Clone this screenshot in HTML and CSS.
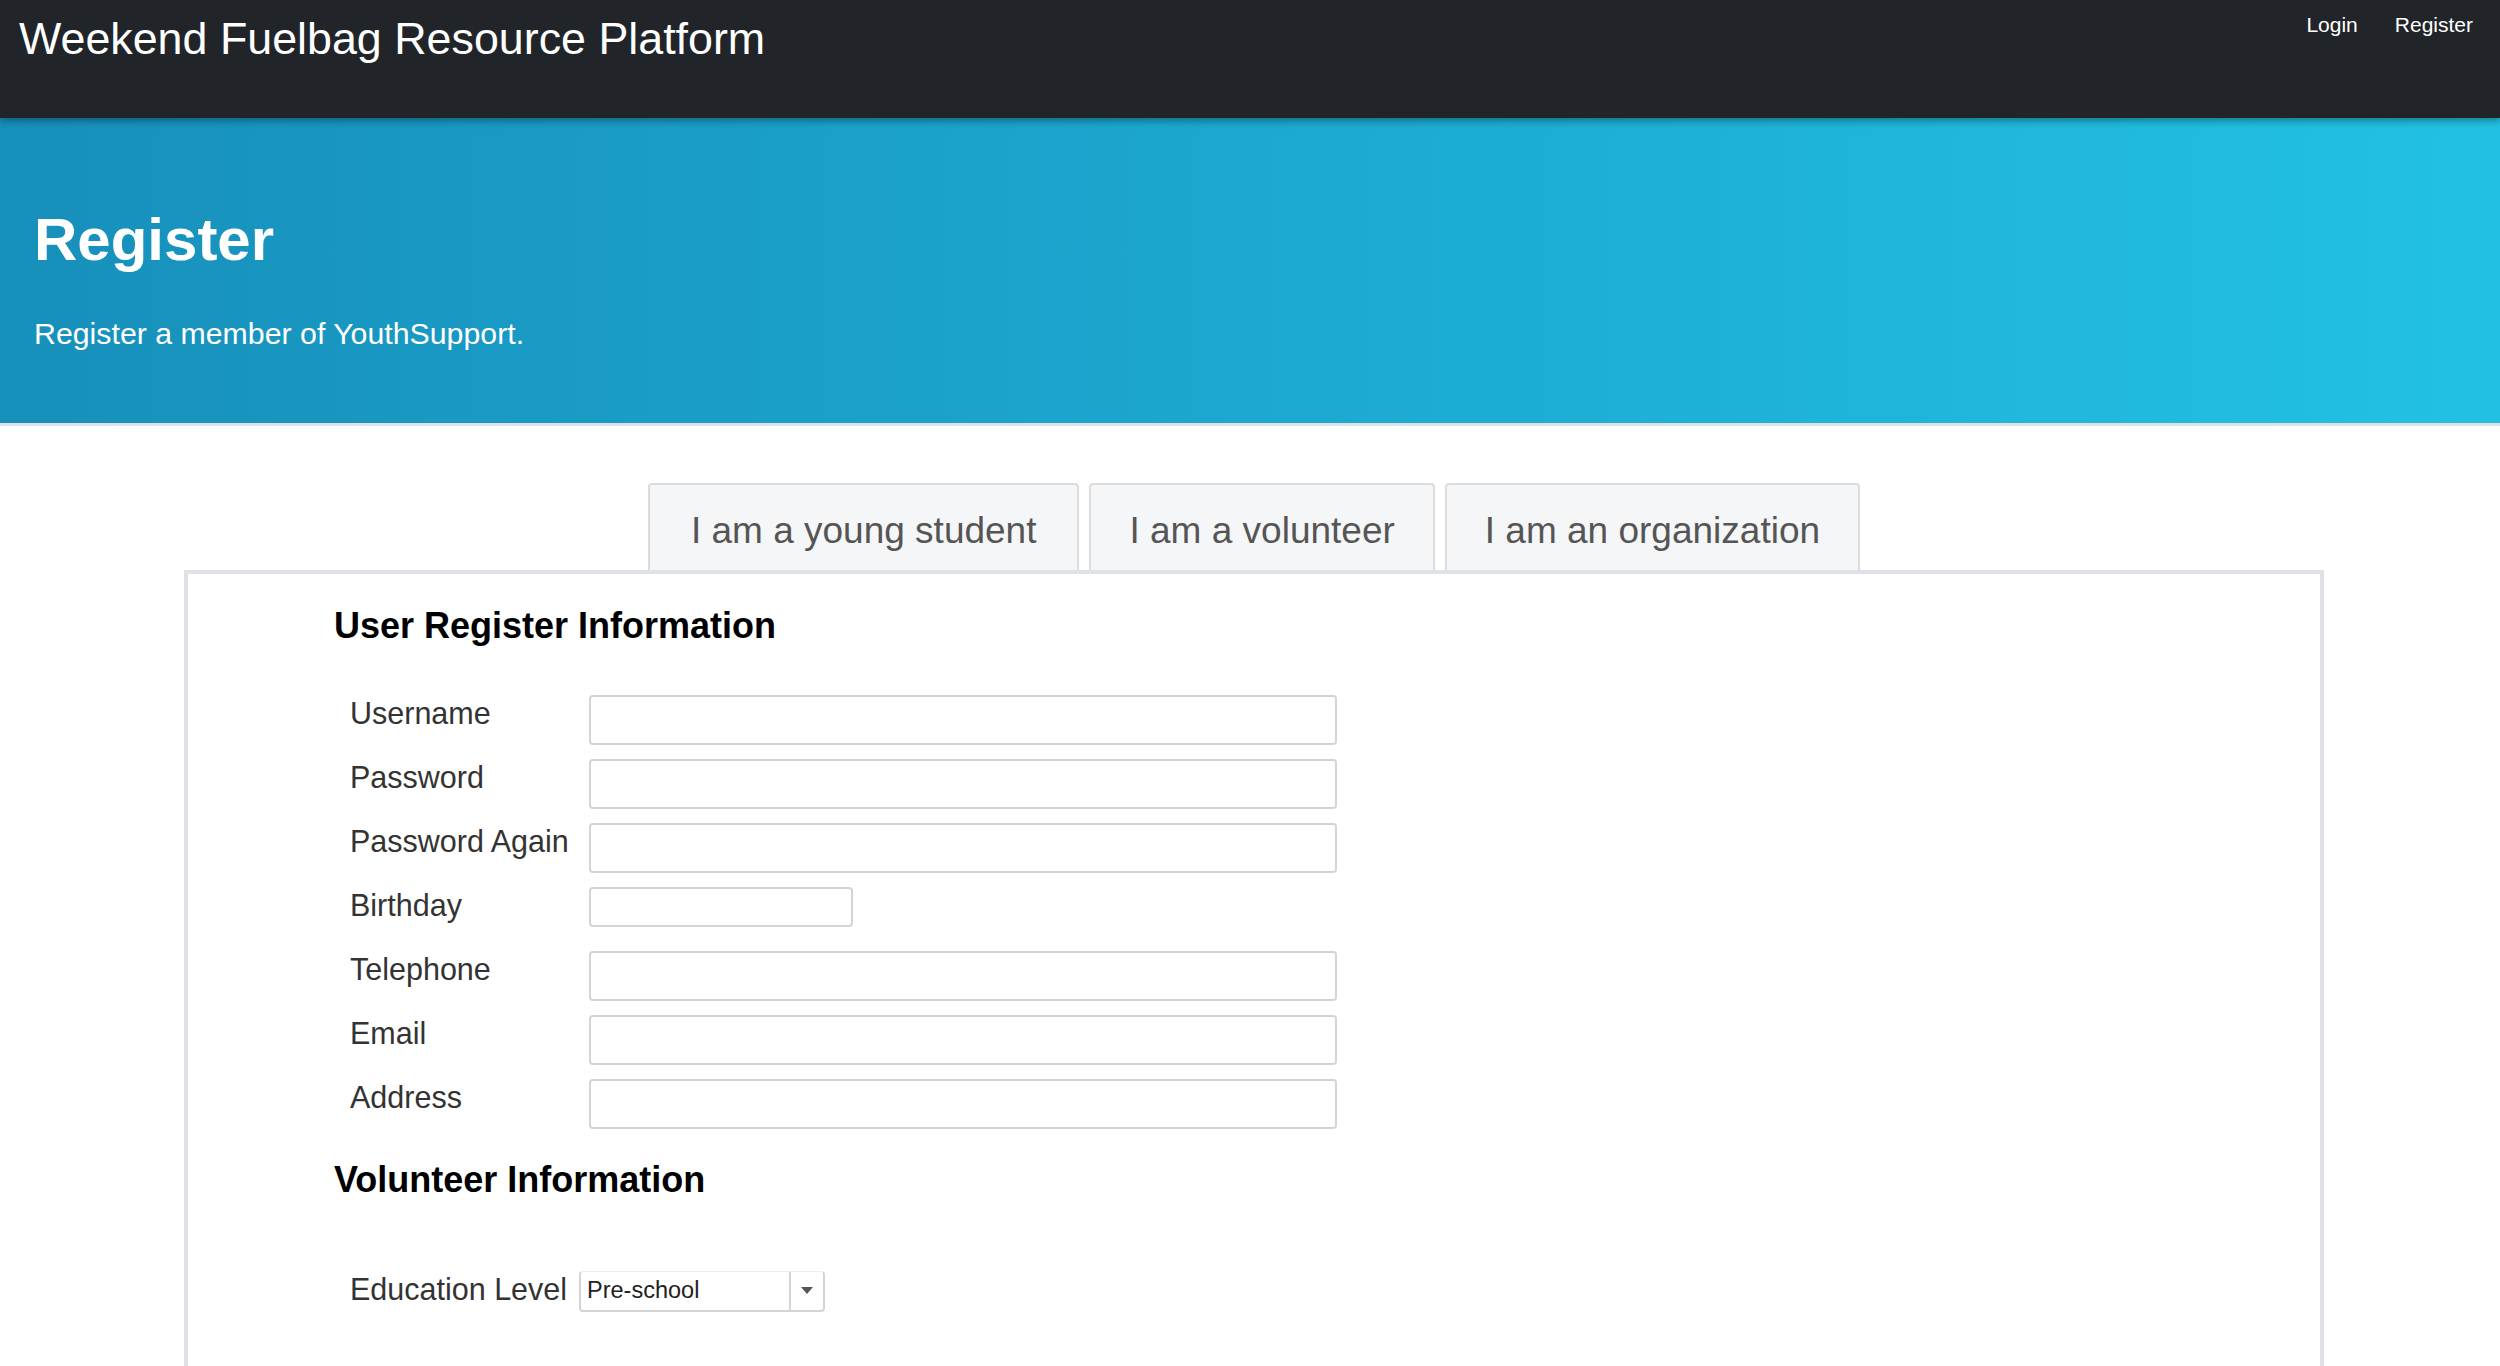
FILE: index.html
```html
<!DOCTYPE html>
<html lang="en">
<head>
<meta charset="utf-8">
<title>Register - Weekend Fuelbag Resource Platform</title>
<link rel="stylesheet" href="styles.css">
</head>
<body>
<nav class="navbar">
  <a class="brand" href="#">Weekend Fuelbag Resource Platform</a>
  <div class="nav-links">
    <a class="nav-link" href="#">Login</a>
    <a class="nav-link" href="#">Register</a>
  </div>
</nav>
<header class="hero">
  <h1 class="hero-title">Register</h1>
  <p class="hero-sub">Register a member of YouthSupport.</p>
</header>
<main class="main">
  <div class="tabs">
    <div class="tab tab-wide">I am a young student</div>
    <div class="tab">I am a volunteer</div>
    <div class="tab">I am an organization</div>
  </div>
  <section class="panel">
    <h2 class="section-title">User Register Information</h2>
    <div class="form-row"><label class="form-label">Username</label><input class="field" type="text"></div>
    <div class="form-row"><label class="form-label">Password</label><input class="field" type="password"></div>
    <div class="form-row"><label class="form-label">Password Again</label><input class="field" type="password"></div>
    <div class="form-row"><label class="form-label">Birthday</label><input class="field field-short" type="text"></div>
    <div class="form-row"><label class="form-label">Telephone</label><input class="field" type="text"></div>
    <div class="form-row"><label class="form-label">Email</label><input class="field" type="text"></div>
    <div class="form-row"><label class="form-label">Address</label><input class="field" type="text"></div>
    <h2 class="section-title">Volunteer Information</h2>
    <div class="edu-row">
      <label class="edu-label">Education Level</label>
      <div class="select">
        <span class="select-value">Pre-school</span>
        <span class="select-arrow"><svg width="12" height="8" viewBox="0 0 12 8"><path d="M0 0 L12 0 L6 7 Z" fill="#555"/></svg></span>
      </div>
    </div>
  </section>
</main>
</body>
</html>
```
FILE: styles.css
```css
* { box-sizing: border-box; }
body {
  margin: 0;
  font-family: "Liberation Sans", Arial, Helvetica, sans-serif;
  background: #fff;
  color: #333;
}
.navbar {
  position: relative;
  z-index: 2;
  height: 118px;
  background: #212529;
  display: flex;
  justify-content: space-between;
  align-items: flex-start;
  box-shadow: 0 3px 7px rgba(0, 0, 0, 0.35);
}
.brand {
  color: #fff;
  text-decoration: none;
  font-size: 44.8px;
  line-height: 1;
  padding: 16px 0 0 19px;
}
.nav-links {
  display: flex;
  gap: 37px;
  padding: 14px 27px 0 0;
}
.nav-link {
  color: #fff;
  text-decoration: none;
  font-size: 21px;
  line-height: 1;
}
.hero {
  height: 308px;
  background: linear-gradient(to right, #1790bb 0%, #1ca8d0 50%, #22c1e3 100%);
  border-bottom: 3px solid #dee2e6;
  padding: 92px 0 0 34px;
  color: #fff;
}
.hero-title {
  margin: 0;
  font-size: 60px;
  line-height: 1;
  font-weight: bold;
}
.hero-sub {
  margin: 49px 0 0;
  font-size: 30.3px;
  line-height: 1;
}
.main {
  width: 2140px;
  margin-left: 184px;
}
.tabs {
  display: flex;
  justify-content: center;
  gap: 10px;
  margin-top: 57px;
}
.tab {
  height: 87px;
  padding: 27px 38px 0;
  background: #f5f6f8;
  border: 2px solid #dcdcdc;
  border-bottom: none;
  border-radius: 4px 4px 0 0;
  color: #555;
  font-size: 37px;
  line-height: 1;
  white-space: nowrap;
}
.tab-wide { padding: 27px 41px 0; }
.panel {
  border: 4px solid #dee2e6;
  padding: 34px 40px 120px 146px;
}
.section-title {
  margin: 0;
  font-size: 36px;
  line-height: 1;
  font-weight: bold;
  color: #000;
}
.section-title + .form-row { margin-top: 51px; }
.form-row + .section-title { margin-top: 33px; }
.form-row {
  display: flex;
  align-items: flex-start;
  min-height: 50px;
  margin-bottom: 14px;
  padding-left: 16px;
}
.form-row:last-of-type { margin-bottom: 0; }
.form-label {
  width: 239px;
  flex: none;
  padding-top: 3px;
  font-size: 30.5px;
  line-height: 1;
  color: #333;
}
.field {
  display: block;
  margin: 0;
  width: 748px;
  height: 50px;
  border: 2px solid #d4d4d4;
  border-radius: 4px;
  background: #fff;
  outline: none;
  font-size: 24px;
}
.field-short {
  width: 264px;
  height: 40px;
}
.edu-row {
  display: flex;
  align-items: flex-start;
  margin-top: 73px;
  padding-left: 16px;
}
.edu-label {
  padding-top: 3px;
  margin-right: 12px;
  font-size: 30.5px;
  line-height: 1;
  color: #333;
}
.select {
  display: flex;
  align-items: stretch;
  width: 246px;
  height: 41px;
  border: 2px solid #d4d4d4;
  border-top: 1px solid #ececec;
  border-radius: 4px;
  background: #fff;
}
.select-value {
  flex: 1;
  display: flex;
  align-items: center;
  padding-left: 6px;
  font-size: 23.5px;
  line-height: 1;
  color: #222;
}
.select-arrow {
  width: 34px;
  flex: none;
  border-left: 2px solid #d4d4d4;
  display: flex;
  align-items: center;
  justify-content: center;
}
```
